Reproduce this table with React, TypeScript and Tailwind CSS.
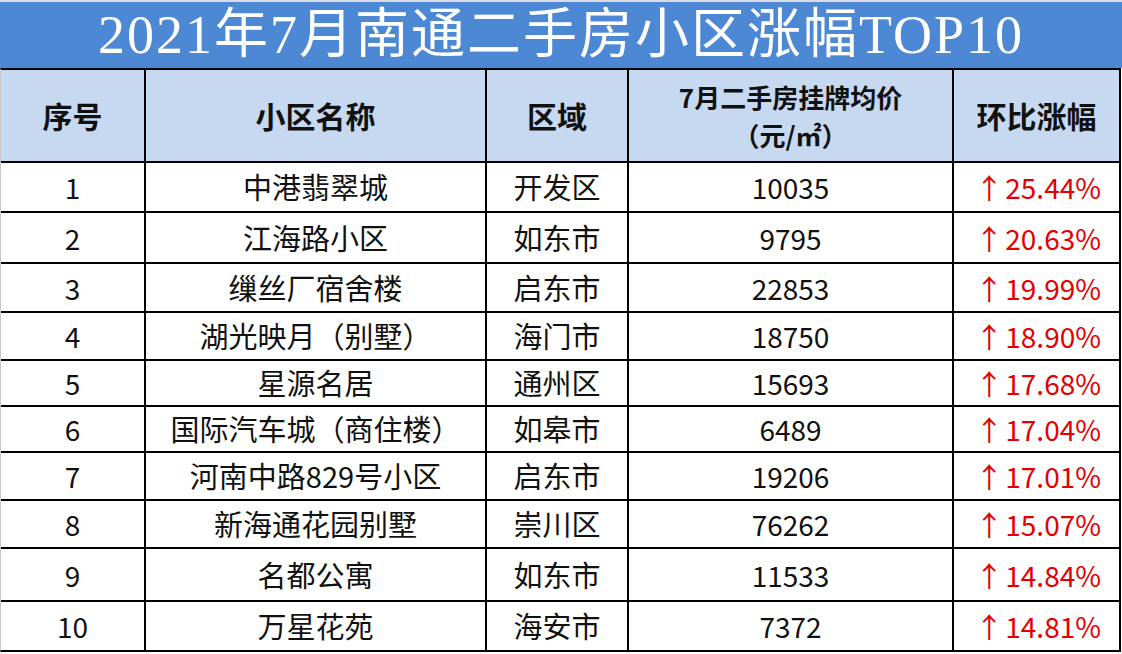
import React from "react"

const rows = [
  { no: 1, name: "中港翡翠城", area: "开发区", price: "10035", rate: "25.44%", h: "h-[48px]" },
  { no: 2, name: "江海路小区", area: "如东市", price: "9795", rate: "20.63%", h: "h-[49px]" },
  { no: 3, name: "缫丝厂宿舍楼", area: "启东市", price: "22853", rate: "19.99%", h: "h-[47px]" },
  { no: 4, name: "湖光映月（别墅）", area: "海门市", price: "18750", rate: "18.90%", h: "h-[46px]" },
  { no: 5, name: "星源名居", area: "通州区", price: "15693", rate: "17.68%", h: "h-[44px]" },
  { no: 6, name: "国际汽车城（商住楼）", area: "如皋市", price: "6489", rate: "17.04%", h: "h-[44px]" },
  { no: 7, name: "河南中路829号小区", area: "启东市", price: "19206", rate: "17.01%", h: "h-[46px]" },
  { no: 8, name: "新海通花园别墅", area: "崇川区", price: "76262", rate: "15.07%", h: "h-[46px]" },
  { no: 9, name: "名都公寓", area: "如东市", price: "11533", rate: "14.84%", h: "h-[51px]" },
  { no: 10, name: "万星花苑", area: "海安市", price: "7372", rate: "14.81%", h: "h-[48px]" },
]

const cjk = "font-['Noto_Sans_CJK_SC','Noto_Sans',sans-serif]"

export default function App() {
  return (
    <div className="w-[1122px] h-[654px] bg-white overflow-hidden">
      {/* Title */}
      <div className="h-[68px] bg-[#4d88d4] border-t-2 border-[#d9dde3] flex items-center justify-center">
        <h1 className="text-white text-[54px] leading-none tracking-[2px] font-['Liberation_Serif','Noto_Sans_CJK_SC',serif]">
          2021年7月南通二手房小区涨幅TOP10
        </h1>
      </div>

      {/* Table */}
      <div className={`w-[1121px] grid grid-cols-[143px_339px_140px_323px_165px] gap-[2px] bg-black border-t-2 border-r-2 border-b-2 border-black border-l border-l-[#c8c8c8] ${cjk}`}>
        {/* Header */}
        <div className="h-[91px] bg-[#c6d9f0] flex items-center justify-center text-[30px] font-bold text-[#111]">序号</div>
        <div className="h-[91px] bg-[#c6d9f0] flex items-center justify-center text-[30px] font-bold text-[#111]">小区名称</div>
        <div className="h-[91px] bg-[#c6d9f0] flex items-center justify-center text-[30px] font-bold text-[#111]">区域</div>
        <div className="h-[91px] bg-[#c6d9f0] flex flex-col items-center justify-center text-[26px] leading-[38px] font-bold text-[#111]">
          <span>7月二手房挂牌均价</span>
          <span>（元/㎡）</span>
        </div>
        <div className="h-[91px] bg-[#c6d9f0] flex items-center justify-center text-[30px] font-bold text-[#111]">环比涨幅</div>

        {rows.map((r) => (
          <React.Fragment key={r.no}>
            <div className={`${r.h} bg-white flex items-center justify-center text-[28px] text-[#111]`}>{r.no}</div>
            <div className={`${r.h} bg-white flex items-center justify-center text-[29px] text-[#111]`}>{r.name}</div>
            <div className={`${r.h} bg-white flex items-center justify-center text-[29px] text-[#111]`}>{r.area}</div>
            <div className={`${r.h} bg-white flex items-center justify-center text-[28px] text-[#111]`}>{r.price}</div>
            <div className={`${r.h} bg-white flex items-center justify-end pr-[18px] text-[28px] text-[#e30000]`}>
              <span className="mr-[2px]">↑</span>
              <span>{r.rate}</span>
            </div>
          </React.Fragment>
        ))}
      </div>
    </div>
  )
}
